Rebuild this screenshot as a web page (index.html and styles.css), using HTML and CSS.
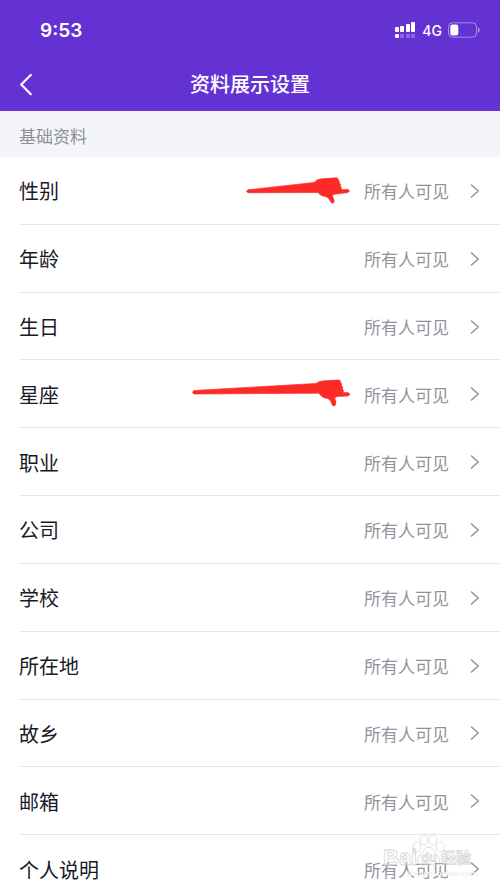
FILE: index.html
```html
<!DOCTYPE html>
<html lang="zh-CN">
<head>
<meta charset="utf-8">
<meta name="viewport" content="width=device-width, initial-scale=1">
<title>资料展示设置</title>
<link rel="stylesheet" href="styles.css">
</head>
<body>
<div class="screen">
  <header class="header">
    <div class="status">
      <time class="clock">9:53</time>
      <div class="indicators">
        <svg class="signal" width="22" height="18" viewBox="0 0 22 18" aria-hidden="true">
          <g fill="#fff"><rect x="1" y="6" width="4" height="5" rx="1"/><rect x="6" y="5" width="4" height="6" rx="1"/><rect x="12" y="3" width="4" height="8" rx="1"/><rect x="17" y="1" width="4" height="10" rx="1"/><rect x="1" y="13" width="4" height="4" rx="1"/></g>
          <g fill="#fff" opacity=".28"><rect x="6" y="13" width="4" height="4" rx="1"/><rect x="12" y="13" width="4" height="4" rx="1"/><rect x="17" y="13" width="4" height="4" rx="1"/></g>
        </svg>
        <span class="network">4G</span>
        <svg class="battery" width="32" height="16" viewBox="0 0 32 16" aria-hidden="true">
          <rect x="0.5" y="0.8" width="28" height="14.4" rx="4" fill="none" stroke="#fff" stroke-opacity=".45"/>
          <rect x="2.3" y="2.6" width="8" height="10.8" rx="2.2" fill="#fff"/>
          <path d="M30 5.400c2.300.9 2.300 4.300 0 5.200z" fill="#fff" fill-opacity=".5"/>
        </svg>
      </div>
    </div>
    <nav class="nav">
      <button class="back" type="button" aria-label="返回">
        <svg width="14" height="24" viewBox="0 0 14 24" aria-hidden="true"><path d="M11.800 2 2.200 11.500l9.600 9.700" fill="none" stroke="#fff" stroke-width="2.200" stroke-linecap="round" stroke-linejoin="round"/></svg>
      </button>
      <h1 class="title">资料展示设置</h1>
    </nav>
  </header>
  <main class="content">
    <h2 class="section">基础资料</h2>
    <ul class="list">
      <li><a class="row" href="#"><span class="label">性别</span>
        <svg class="pointer" width="104" height="28" viewBox="0 0 104 28" aria-hidden="true"><path d="M2 12.800 68 5.500Q71 2 76 1.800L90 .8q2.500 0 2 2 2.300 1 1 3 2.600 1.500 1.200 3.500 2 1.500.8 3.500l7-.4q2.700 1.600 0 3.200L88 17.300l-1.800 1.700q2.500 4 1.800 6-1.500 2.500-3.200 0-1.500-4.500-5.300-5.500-4.500 0-7.500-4L2 15.800q-3-1.500 0-3Z" fill="#fc2b28" stroke="#fc2b28" stroke-width=".7"/></svg>
        <span class="value">所有人可见</span><svg class="chevron" width="10" height="14" viewBox="0 0 10 14" aria-hidden="true"><path d="m1.500 1 6.800 6-6.800 6"/></svg></a></li>
      <li><a class="row" href="#"><span class="label">年龄</span><span class="value">所有人可见</span><svg class="chevron" width="10" height="14" viewBox="0 0 10 14" aria-hidden="true"><path d="m1.500 1 6.800 6-6.800 6"/></svg></a></li>
      <li><a class="row" href="#"><span class="label">生日</span><span class="value">所有人可见</span><svg class="chevron" width="10" height="14" viewBox="0 0 10 14" aria-hidden="true"><path d="m1.500 1 6.800 6-6.800 6"/></svg></a></li>
      <li><a class="row" href="#"><span class="label">星座</span>
        <svg class="pointer" width="158" height="30" viewBox="0 0 158 30" aria-hidden="true"><path d="M2 11.500 124 4.500Q127 2 132 1.800L146 1q3-.2 2.500 2.500 2 1 .8 3 2.400 1.600 1 3.500 2 1.500.6 3.500l5.500.2q2.500 1.500 0 3.200l-11 .5-3 1.500q2.500 4 1 7-1.500 2-3.200 0-1-5-4.500-6.300-5 0-9-5.400L2 15q-3-1.500 0-3.500Z" fill="#fc2b28" stroke="#fc2b28" stroke-width=".7"/></svg>
        <span class="value">所有人可见</span><svg class="chevron" width="10" height="14" viewBox="0 0 10 14" aria-hidden="true"><path d="m1.500 1 6.800 6-6.800 6"/></svg></a></li>
      <li><a class="row" href="#"><span class="label">职业</span><span class="value">所有人可见</span><svg class="chevron" width="10" height="14" viewBox="0 0 10 14" aria-hidden="true"><path d="m1.500 1 6.800 6-6.800 6"/></svg></a></li>
      <li><a class="row" href="#"><span class="label">公司</span><span class="value">所有人可见</span><svg class="chevron" width="10" height="14" viewBox="0 0 10 14" aria-hidden="true"><path d="m1.500 1 6.800 6-6.800 6"/></svg></a></li>
      <li><a class="row" href="#"><span class="label">学校</span><span class="value">所有人可见</span><svg class="chevron" width="10" height="14" viewBox="0 0 10 14" aria-hidden="true"><path d="m1.500 1 6.800 6-6.800 6"/></svg></a></li>
      <li><a class="row" href="#"><span class="label">所在地</span><span class="value">所有人可见</span><svg class="chevron" width="10" height="14" viewBox="0 0 10 14" aria-hidden="true"><path d="m1.500 1 6.800 6-6.800 6"/></svg></a></li>
      <li><a class="row" href="#"><span class="label">故乡</span><span class="value">所有人可见</span><svg class="chevron" width="10" height="14" viewBox="0 0 10 14" aria-hidden="true"><path d="m1.500 1 6.800 6-6.800 6"/></svg></a></li>
      <li><a class="row" href="#"><span class="label">邮箱</span><span class="value">所有人可见</span><svg class="chevron" width="10" height="14" viewBox="0 0 10 14" aria-hidden="true"><path d="m1.500 1 6.800 6-6.800 6"/></svg></a></li>
      <li><a class="row" href="#"><span class="label">个人说明</span><span class="value">所有人可见</span><svg class="chevron" width="10" height="14" viewBox="0 0 10 14" aria-hidden="true"><path d="m1.500 1 6.800 6-6.800 6"/></svg></a></li>
    </ul>
  </main>
  <svg class="watermark" width="100" height="48" viewBox="0 0 100 48" aria-hidden="true">
    <g fill="none" stroke="#d6d6da" stroke-width=".8">
      <ellipse cx="36" cy="13" rx="4" ry="5"/><ellipse cx="43" cy="6" rx="4" ry="5"/><ellipse cx="52" cy="6" rx="4" ry="5"/><ellipse cx="59" cy="13" rx="4" ry="5"/>
      <path d="M47 13c5 0 6 5 9 8s4 10-2 10c-4 0-7-1-11 0-7 1-8-6-4-10s4-8 8-8Z"/>
      <text x="2" y="31" class="mark-latin">Bai</text>
      <text x="60" y="29" class="mark-cjk">经验</text>
      <text x="40" y="28" class="mark-du">du</text>
    </g>
    <text x="26" y="42" class="mark-url">jingyan.baidu.com</text>
  </svg>
</div>
</body>
</html>
```
FILE: styles.css
```css
* {
  box-sizing: border-box;
}

body {
  margin: 0;
  background: #fff;
  font-family: Inter, "Noto Sans CJK SC", sans-serif;
}

.screen {
  position: relative;
  height: 100vh;
  overflow: hidden;
}

.header {
  background: #6431d3;
  color: #fff;
}

.status {
  display: flex;
  align-items: center;
  justify-content: space-between;
  height: 60px;
  padding: 0 20px 0 40px;
}

.clock {
  font-size: 19px;
  font-weight: 600;
}

.indicators {
  display: flex;
  align-items: center;
  gap: 6px;
}

.network {
  font-size: 14px;
  font-weight: 500;
}

.nav {
  display: grid;
  grid-template-columns: 50px 1fr 50px;
  align-items: center;
  height: 51px;
  padding-bottom: 2px;
}

.back {
  display: flex;
  padding: 0 0 0 19px;
  border: 0;
  background: none;
}

.title {
  margin: 0;
  font-size: 20px;
  font-weight: 500;
  line-height: 30px;
  text-align: center;
}

.section {
  margin: 0;
  padding-top: 7px;
  padding-left: 19px;
  background: #f4f5fa;
  color: #8d8d96;
  font-size: 17px;
  font-weight: 400;
  line-height: 39px;
}

.list {
  display: grid;
  grid-auto-rows: 1fr;
  min-height: 746px;
  margin: 0;
  padding: 0 0 0 19px;
  list-style: none;
}

.list li {
  display: grid;
  border-bottom: 1px solid #e7e7ea;
}

.row {
  display: flex;
  align-items: center;
  padding: 1px 20px 0 0;
  color: inherit;
  text-decoration: none;
}

.label {
  flex: 1;
  color: #191927;
  font-size: 20px;
}

.pointer {
  margin-right: 14px;
}

.value {
  color: #92929d;
  font-size: 17px;
}

.chevron {
  margin-left: 21px;
  fill: none;
  stroke: #92929d;
  stroke-width: 1.5;
  stroke-linecap: round;
  stroke-linejoin: round;
}

.watermark {
  position: absolute;
  right: 19px;
  bottom: 7px;
  font-family: "Liberation Sans", "Noto Sans CJK SC", sans-serif;
  font-weight: 700;
}

.mark-latin {
  font-size: 22px;
}

.mark-cjk {
  font-size: 15px;
}

.mark-du {
  font-size: 13px;
}

.mark-url {
  fill: #f0f0f2;
  font-size: 8px;
}
```
